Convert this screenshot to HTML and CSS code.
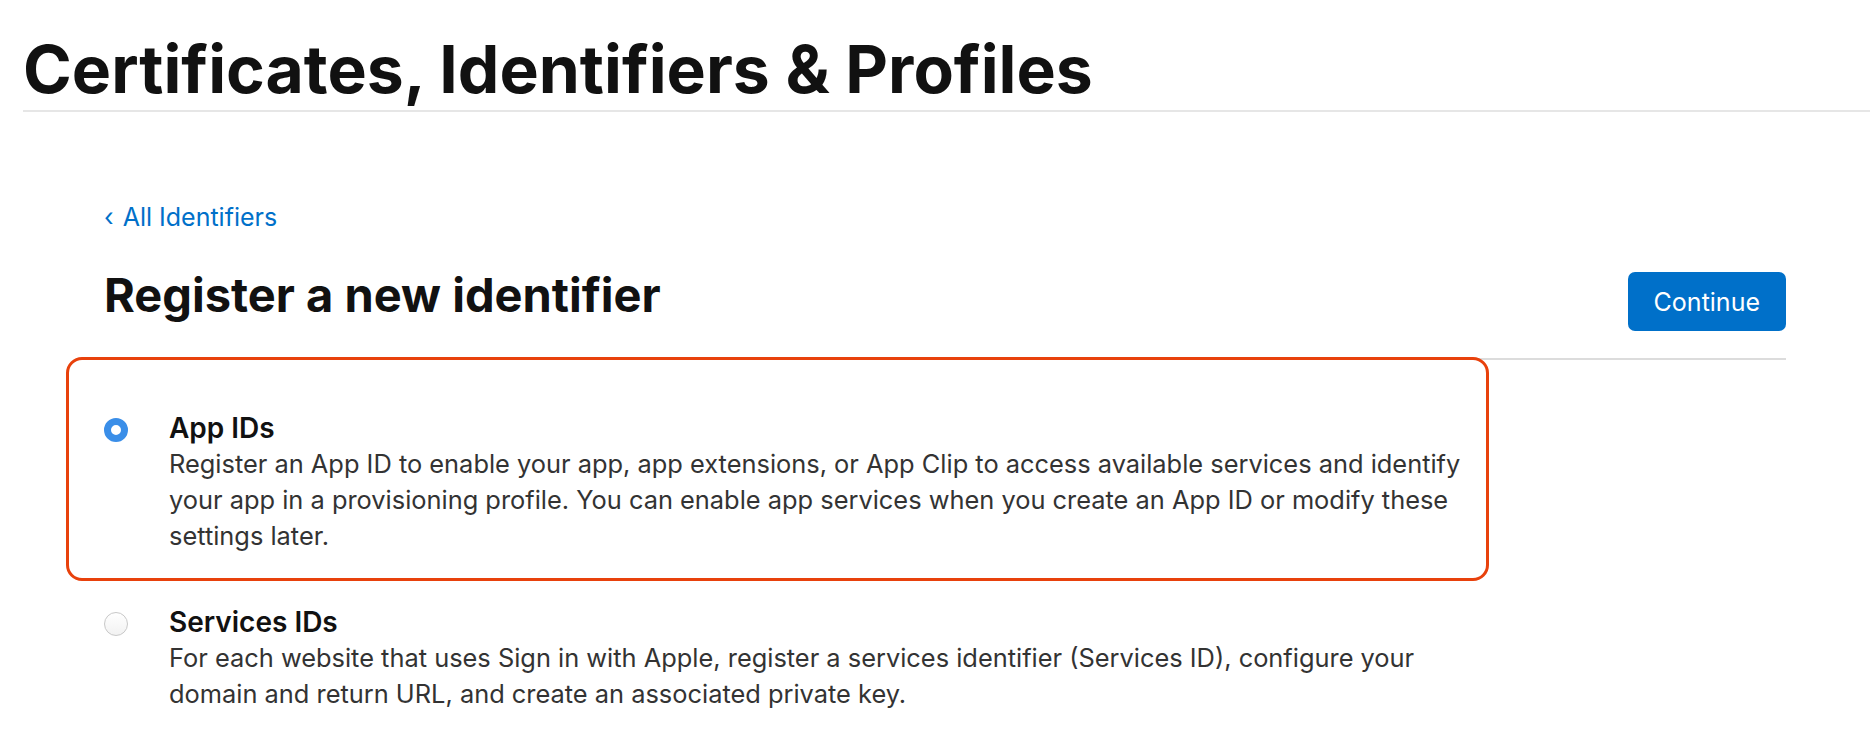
FILE: index.html
```html
<!DOCTYPE html>
<html lang="en">
<head>
    <meta charset="UTF-8">
    <meta name="viewport" content="width=device-width, initial-scale=1.0">
    <title>Certificates, Identifiers &amp; Profiles</title>
    <link rel="stylesheet" href="styles.css">
</head>
<body>

    <header class="page-header">
        <h1 class="page-title">Certificates, Identifiers &amp; Profiles</h1>
    </header>

    <main class="content">
        <a class="back-link" href="#"><span class="chevron">&lsaquo;</span> All Identifiers</a>

        <div class="title-row">
            <h2 class="section-title">Register a new identifier</h2>
            <button class="btn-primary" type="button">Continue</button>
        </div>

        <ul class="options">
            <li class="option option--selected">
                <span class="radio radio--checked"></span>
                <div class="option-body">
                    <h3 class="option-name">App IDs</h3>
                    <p class="option-desc">Register an App ID to enable your app, app extensions, or App Clip to access available services and identify your app in a provisioning profile. You can enable app services when you create an App ID or modify these settings later.</p>
                </div>
            </li>
            <li class="option">
                <span class="radio"></span>
                <div class="option-body">
                    <h3 class="option-name">Services IDs</h3>
                    <p class="option-desc">For each website that uses Sign in with Apple, register a services identifier (Services ID), configure your domain and return URL, and create an associated private key.</p>
                </div>
            </li>
        </ul>
    </main>

</body>
</html>
```

FILE: styles.css
```css
body {
    margin: 0;
    background-color: #fff;
    color: #1d1d1f;
    font-family: "Inter", "Liberation Sans", sans-serif;
}
.page-header {
    margin-left: 23px;
    padding-top: 36px;
    padding-bottom: 8px;
    border-bottom: 2px solid #e6e6e6;
}
.page-title {
    margin: 0;
    font-size: 66px;
    line-height: 66px;
    font-weight: 700;
    color: #111;
}
.content {
    margin-left: 104px;
    width: 1682px;
}
.back-link {
    display: block;
    margin-top: 87px;
    font-size: 25px;
    line-height: 36px;
    color: #0070c9;
    text-decoration: none;
}
.chevron {
    margin-right: 2px;
}
.title-row {
    display: flex;
    justify-content: space-between;
    align-items: flex-start;
    margin-top: 32px;
    padding-bottom: 27px;
    border-bottom: 2px solid #dcdcdc;
}
.section-title {
    margin: 0;
    font-size: 47px;
    line-height: 56px;
    font-weight: 700;
    color: #111;
}
.btn-primary {
    margin-top: 5px;
    height: 59px;
    padding: 0 26px;
    font-family: inherit;
    font-size: 25px;
    color: white;
    background-color: #0070c9;
    border: none;
    border-radius: 7px;
    cursor: pointer;
}
.options {
    list-style: none;
    margin: -3px 0 0 0;
    padding: 0;
}
.option {
    display: grid;
    grid-template-columns: 65px 1306px;
    box-sizing: border-box;
    width: 1423px;
    margin-left: -38px;
    padding: 20px 11px 24px 35px;
    border: 3px solid transparent;
    border-radius: 16px;
}
.option--selected {
    padding-top: 50px;
    border-color: #e8410c;
}
.radio {
    box-sizing: border-box;
    width: 24px;
    height: 24px;
    margin-top: 8px;
    border: 1px solid #c8c8c8;
    border-radius: 50%;
    background: linear-gradient(#fff, #f2f2f2);
}
.radio--checked {
    border: 7px solid #3a8ee8;
    background: #fff;
}
.option-name {
    margin: 0;
    font-size: 28px;
    line-height: 36px;
    font-weight: 600;
    color: #111;
}
.option-desc {
    margin: 0;
    font-size: 25.4px;
    line-height: 36px;
    color: #333;
}
```
